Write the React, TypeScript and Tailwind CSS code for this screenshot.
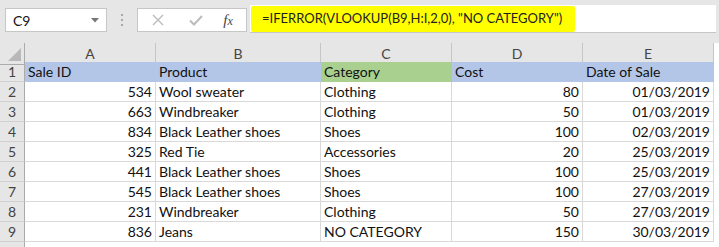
import React from "react"

type Row = {
  id: string
  product: string
  category: string
  cost: string
  date: string
}

const rows: Row[] = [
  { id: "534", product: "Wool sweater", category: "Clothing", cost: "80", date: "01/03/2019" },
  { id: "663", product: "Windbreaker", category: "Clothing", cost: "50", date: "01/03/2019" },
  { id: "834", product: "Black Leather shoes", category: "Shoes", cost: "100", date: "02/03/2019" },
  { id: "325", product: "Red Tie", category: "Accessories", cost: "20", date: "25/03/2019" },
  { id: "441", product: "Black Leather shoes", category: "Shoes", cost: "100", date: "25/03/2019" },
  { id: "545", product: "Black Leather shoes", category: "Shoes", cost: "100", date: "27/03/2019" },
  { id: "231", product: "Windbreaker", category: "Clothing", cost: "50", date: "27/03/2019" },
  { id: "836", product: "Jeans", category: "NO CATEGORY", cost: "150", date: "30/03/2019" },
]

const cols = "grid grid-cols-[25px_131px_165px_131px_131px_131px]"

function RowHead({ n }: { n: number }) {
  return (
    <div className="h-[20px] flex items-center justify-center bg-[#e6e6e6] border-r border-b border-r-[#ababab] border-b-[#d0d0d0] text-[#444] text-[14px]">
      {n}
    </div>
  )
}

function Cell({ children, right, fill }: { children?: React.ReactNode; right?: boolean; fill?: string }) {
  return (
    <div
      className={`h-[20px] flex items-center px-[3px] border-r border-b whitespace-nowrap overflow-hidden ${right ? "justify-end" : ""} ${
        fill ?? "bg-white border-[#d9d9d9]"
      }`}
    >
      {children}
    </div>
  )
}

export default function App() {
  return (
    <div className="w-[719px] h-[247px] bg-white overflow-hidden text-[#111] font-['Lato',sans-serif] text-[14px]">
      {/* formula bar */}
      <div className="h-[43px] bg-[#e6e6e6] flex items-start pt-[8px]">
        <div className="ml-[5px] w-[102px] h-[24px] bg-white border border-[#c6c6c6] flex items-center pl-[7px] pr-[7px] text-[14px]">
          <span className="flex-1">C9</span>
          <svg width="8" height="5" viewBox="0 0 8 5">
            <path d="M0 0H8L4 4.5Z" fill="#777" />
          </svg>
        </div>
        <div className="w-[30px] h-[24px] flex flex-col items-center justify-center gap-[3px]">
          <span className="w-[2px] h-[2px] bg-[#a8a8a8]" />
          <span className="w-[2px] h-[2px] bg-[#a8a8a8]" />
          <span className="w-[2px] h-[2px] bg-[#a8a8a8]" />
        </div>
        <div className="w-[110px] h-[24px] bg-white border border-[#c6c6c6] flex items-center">
          <div className="w-[40px] flex justify-center">
            <svg width="12" height="12" viewBox="0 0 12 12">
              <path d="M1 1L11 11M11 1L1 11" stroke="#bcbcbc" strokeWidth="1.4" />
            </svg>
          </div>
          <div className="w-[36px] flex justify-center">
            <svg width="14" height="11" viewBox="0 0 14 11">
              <path d="M1 5.5L5 9.5L13 1" stroke="#bcbcbc" strokeWidth="2" fill="none" />
            </svg>
          </div>
          <div className="flex-1 flex justify-center font-['Liberation_Serif',serif] italic text-[15px] text-[#444] pr-[4px]">
            <span>f</span>
            <span className="text-[12px] mt-[3px]">x</span>
          </div>
        </div>
        <div className="ml-[3px] -mt-[3px] w-[466px] h-[28px] bg-white border-b border-[#c6c6c6] flex items-center">
          <div className="ml-[1px] h-[26px] w-[324px] bg-[#ffff00] rounded-[2px] flex items-center pl-[11px] text-[13px] text-[#222] whitespace-nowrap">
            =IFERROR(VLOOKUP(B9,H:I,2,0), "NO CATEGORY")
          </div>
        </div>
      </div>

      {/* column headers */}
      <div className={`${cols} h-[19px]`}>
        <div className="bg-[#e6e6e6] border-r border-b border-r-[#ababab] border-b-[#ababab] relative">
          <svg className="absolute right-[3px] bottom-[3px]" width="13" height="13" viewBox="0 0 13 13">
            <path d="M13 0V13H0Z" fill="#b8b8b8" />
          </svg>
        </div>
        {["A", "B", "C", "D", "E"].map(l => (
          <div
            key={l}
            className="bg-[#e6e6e6] border-r border-b border-r-[#c6c6c6] border-b-[#ababab] flex items-center justify-center text-[#444] text-[14px]"
          >
            {l}
          </div>
        ))}
      </div>

      {/* row 1 */}
      <div className={cols}>
        <RowHead n={1} />
        <Cell fill="bg-[#b4c6e7] border-[#b4c6e7]">Sale ID</Cell>
        <Cell fill="bg-[#b4c6e7] border-[#b4c6e7]">Product</Cell>
        <Cell fill="bg-[#a9d08e] border-[#a9d08e]">Category</Cell>
        <Cell fill="bg-[#b4c6e7] border-[#b4c6e7]">Cost</Cell>
        <Cell fill="bg-[#b4c6e7] border-[#b4c6e7]">Date of Sale</Cell>
      </div>

      {rows.map((r, i) => (
        <div key={i} className={cols}>
          <RowHead n={i + 2} />
          <Cell right>{r.id}</Cell>
          <Cell>{r.product}</Cell>
          <Cell>{r.category}</Cell>
          <Cell right>{r.cost}</Cell>
          <Cell right>{r.date}</Cell>
        </div>
      ))}

      <div className={cols}>
        <div className="h-[20px] bg-[#e6e6e6] border-r border-r-[#ababab]" />
      </div>
    </div>
  )
}
